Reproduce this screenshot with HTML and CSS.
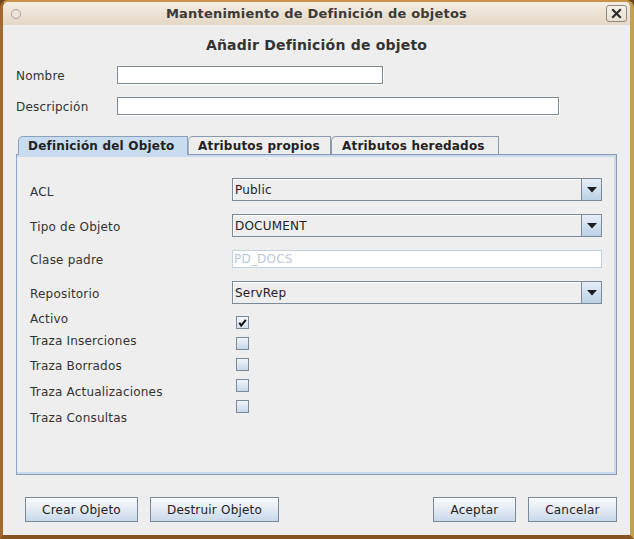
FILE: index.html
```html
<!DOCTYPE html>
<html lang="es">
<head>
<meta charset="utf-8">
<title>Mantenimiento de Definición de objetos</title>
<link rel="stylesheet" href="styles.css">
</head>
<body>
<div class="window">
  <div class="titlebar">
    <span class="tb-circle"></span>
    <span class="tb-title">Mantenimiento de Definición de objetos</span>
    <span class="tb-close">
      <svg width="11" height="11" viewBox="0 0 11 11"><path d="M2 2 L9 9 M9 2 L2 9" stroke="#2e2e2e" stroke-width="2.2" stroke-linecap="square" fill="none"/></svg>
    </span>
  </div>
  <div class="content">
    <div class="heading">Añadir Definición de objeto</div>
    <div class="frow">
      <span class="flabel">Nombre</span>
      <span class="textfield tf-nombre"></span>
    </div>
    <div class="frow frow-desc">
      <span class="flabel">Descripción</span>
      <span class="textfield tf-desc"></span>
    </div>
    <div class="tabs">
      <div class="tab tab-sel tab-1">Definición del Objeto</div>
      <div class="tab tab-2">Atributos propios</div>
      <div class="tab tab-3">Atributos heredados</div>
    </div>
    <div class="panel">
      <div class="labels">
        <span class="plabel">ACL</span>
        <span class="plabel g-tipo">Tipo de Objeto</span>
        <span class="plabel g-clase">Clase padre</span>
        <span class="plabel g-repo">Repositorio</span>
        <span class="plabel g-activo">Activo</span>
        <span class="plabel g-ins">Traza Inserciones</span>
        <span class="plabel g-bor">Traza Borrados</span>
        <span class="plabel g-act">Traza Actualizaciones</span>
        <span class="plabel g-act">Traza Consultas</span>
      </div>
      <div class="fields">
        <div class="combo"><span class="combo-text">Public</span><span class="combo-btn"><svg width="10" height="6" viewBox="0 0 10 6"><path d="M0 0 H10 L5 5.5 Z" fill="#1e1e1e"/></svg></span></div>
        <div class="combo c-next"><span class="combo-text">DOCUMENT</span><span class="combo-btn"><svg width="10" height="6" viewBox="0 0 10 6"><path d="M0 0 H10 L5 5.5 Z" fill="#1e1e1e"/></svg></span></div>
        <div class="disabled-field">PD_DOCS</div>
        <div class="combo c-next"><span class="combo-text">ServRep</span><span class="combo-btn"><svg width="10" height="6" viewBox="0 0 10 6"><path d="M0 0 H10 L5 5.5 Z" fill="#1e1e1e"/></svg></span></div>
        <span class="checkbox checked cb-first"><svg width="11" height="11" viewBox="0 0 11 11"><path d="M2.3 5.8 L4.2 8.6 L8.8 2.8" stroke="#111" stroke-width="2" fill="none"/></svg></span>
        <span class="checkbox cb-next"></span>
        <span class="checkbox cb-next"></span>
        <span class="checkbox cb-next"></span>
        <span class="checkbox cb-next"></span>
      </div>
    </div>
    <div class="buttons">
      <button class="btn b-crear">Crear Objeto</button>
      <button class="btn b-destruir">Destruir Objeto</button>
      <button class="btn b-aceptar">Aceptar</button>
      <button class="btn b-cancelar">Cancelar</button>
    </div>
  </div>
</div>
</body>
</html>
```
FILE: styles.css
```css
html, body {
  margin: 0;
  padding: 0;
  background: #6a461c;
}
body {
  width: 634px;
  height: 539px;
  overflow: hidden;
  font-family: "DejaVu Sans", "Liberation Sans", sans-serif;
  font-size: 12px;
  letter-spacing: 0.2px;
  color: #333333;
}
.window {
  box-sizing: border-box;
  width: 634px;
  height: 539px;
  border-top: 2px solid #c8924a;
  border-left: 3px solid #a8682a;
  border-right: 4px solid #c4a052;
  border-bottom: 4px solid #86521e;
  border-radius: 8px 8px 0 0;
  background: #eeeeee;
  display: flex;
  flex-direction: column;
  overflow: hidden;
}
.titlebar {
  height: 23px;
  flex: none;
  display: grid;
  grid-template-columns: 1fr auto 1fr;
  align-items: center;
  background: linear-gradient(#f4ede2, #e4d8c6);
}
.tb-circle {
  justify-self: start;
  margin-left: 8px;
  width: 8px;
  height: 8px;
  border: 1px solid #a8a29a;
  border-radius: 50%;
  background: #ece4d6;
}
.tb-title {
  font-weight: bold;
  font-size: 13px;
  letter-spacing: 0.2px;
  color: #3c3a38;
  line-height: 16px;
}
.tb-close {
  justify-self: end;
  margin-right: 3px;
  box-sizing: border-box;
  width: 21px;
  height: 17px;
  border: 1px solid #8d8a82;
  border-radius: 3px;
  background: linear-gradient(#f6f1e8, #e8dfd0);
  display: flex;
  align-items: center;
  justify-content: center;
}
.content {
  flex: 1;
  display: flex;
  flex-direction: column;
  padding: 0 13px 0 13px;
}
.heading {
  margin-top: 12px;
  text-align: center;
  font-weight: bold;
  font-size: 14px;
  line-height: 17px;
  color: #333333;
}
.frow {
  display: flex;
  align-items: center;
  margin-top: 12px;
  height: 18px;
}
.frow-desc {
  margin-top: 13px;
}
.flabel {
  width: 101px;
  line-height: 14px;
  padding-top: 1px;
}
.textfield {
  box-sizing: border-box;
  height: 18px;
  background: #ffffff;
  border: 1px solid #7f8a94;
  box-shadow: 1px 1px 0 #ffffff;
}
.tf-nombre { width: 266px; }
.tf-desc { width: 442px; }

.tabs {
  display: flex;
  margin-top: 21px;
  margin-left: 2px;
  height: 18px;
  position: relative;
  z-index: 1;
}
.tab {
  box-sizing: border-box;
  height: 18px;
  border: 1px solid #8a9aae;
  border-bottom: none;
  border-top-left-radius: 5px 5px;
  background: #eeeeee;
  font-weight: bold;
  font-size: 12px;
  line-height: 18px;
  padding-left: 9px;
  color: #222222;
  white-space: nowrap;
}
.tab-sel {
  height: 19px;
  background: #c8dcf0;
  border-color: #8aa0bc;
}
.tab-1 { width: 170px; padding-left: 9px; }
.tab-2 { width: 143px; border-left-color: #a6b2c0; }
.tab-3 { width: 168px; padding-left: 10px; }

.panel {
  box-sizing: border-box;
  height: 321px;
  border: 1px solid #8a9aae;
  border-left-color: #8aa6c8;
  box-shadow: inset 0 2px 0 #c8dbef, inset -2px 0 0 #c8dbef, inset 0 -2px 0 #c8dbef;
  display: flex;
  padding: 0 14px 0 13px;
}
.labels {
  width: 202px;
  display: flex;
  flex-direction: column;
  padding-top: 30px;
}
.plabel {
  line-height: 14px;
  height: 14px;
  white-space: nowrap;
}
.g-tipo { margin-top: 21px; }
.g-clase { margin-top: 19px; }
.g-repo { margin-top: 20px; }
.g-activo { margin-top: 11px; }
.g-ins { margin-top: 8px; }
.g-bor { margin-top: 11px; }
.g-act { margin-top: 12px; }

.fields {
  flex: 1;
  display: flex;
  flex-direction: column;
  align-items: flex-start;
  padding-top: 23px;
}
.combo {
  box-sizing: border-box;
  width: 100%;
  height: 23px;
  border: 1px solid #7b8a98;
  background: #eeeeee;
  display: flex;
  align-items: stretch;
}
.c-next { margin-top: 13px; }
.combo-text {
  flex: 1;
  padding-left: 2px;
  padding-top: 1px;
  line-height: 20px;
  color: #222222;
  box-shadow: inset 1px 1px 0 #ffffff;
}
.combo-btn {
  width: 19px;
  border-left: 1px solid #7b8a98;
  background: linear-gradient(#e6eef7, #bcd1e7);
  display: flex;
  align-items: center;
  justify-content: center;
}
.disabled-field {
  box-sizing: border-box;
  width: 100%;
  height: 18px;
  margin-top: 13px;
  border: 1px solid #c4d2de;
  background: #ffffff;
  color: #b8c8d8;
  line-height: 17px;
  padding-left: 1px;
}
.checkbox {
  box-sizing: border-box;
  width: 13px;
  height: 13px;
  margin-left: 4px;
  border: 1px solid #7b8a98;
  background: linear-gradient(#f1f5fa, #c6d7ea);
  display: flex;
  align-items: center;
  justify-content: center;
}
.checkbox.checked {
  background: linear-gradient(#f4f7fb, #d2e0ee);
}
.cb-first { margin-top: 12px; }
.cb-next { margin-top: 8px; }

.buttons {
  display: flex;
  margin-top: 22px;
  padding-left: 9px;
}
.btn {
  box-sizing: border-box;
  height: 25px;
  border: 1px solid #7b8a9a;
  background: linear-gradient(#fbfcfe, #c9d9ea);
  font-family: "DejaVu Sans", "Liberation Sans", sans-serif;
  font-size: 12px;
  letter-spacing: 0.2px;
  color: #222222;
  padding: 0;
  margin: 0;
  border-radius: 0;
}
.b-crear { width: 113px; }
.b-destruir { width: 129px; margin-left: 12px; }
.b-aceptar { width: 83px; margin-left: auto; }
.b-cancelar { width: 89px; margin-left: 12px; }
```
